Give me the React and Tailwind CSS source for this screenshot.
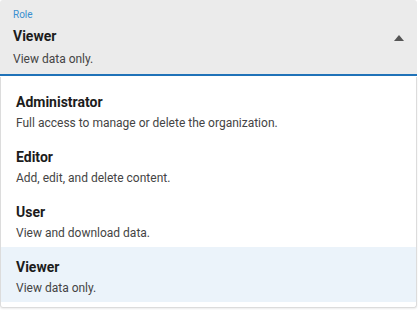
import React, { useState } from "react";

const roles = [
  { name: "Administrator", desc: "Full access to manage or delete the organization." },
  { name: "Editor", desc: "Add, edit, and delete content." },
  { name: "User", desc: "View and download data." },
  { name: "Viewer", desc: "View data only." },
];

function App() {
  const [selected, setSelected] = useState("Viewer");
  const current = roles.find((r) => r.name === selected);

  return (
    <div className="w-[418px] h-[310px] bg-white font-['Roboto','Liberation_Sans',sans-serif]">
      <div className="w-[417px]">
        {/* select field */}
        <div className="bg-[#ebebeb] rounded-t-[3px] border-b-2 border-[#1f72b8] pl-[13px] pr-[13px] pt-[8px] h-[76px] flex items-start">
          <div className="flex-1">
            <div className="text-[10px] leading-[14px] text-[#3a8fd0]">Role</div>
            <div className="mt-[4px] text-[14px] leading-[20px] font-bold text-[#1c1c1c]">{current.name}</div>
            <div className="mt-[5px] text-[12px] leading-[16px] text-[#444]">{current.desc}</div>
          </div>
          <svg className="mt-[27px]" width="10" height="6" viewBox="0 0 10 6">
            <path d="M0 6 L5 0 L10 6 Z" fill="#555" />
          </svg>
        </div>

        {/* menu */}
        <div className="mt-px border border-t-0 border-[#dcdcdc] rounded-b-[3px] pt-[5px] pb-[5px] shadow-[0_1px_2px_rgba(0,0,0,0.08)]">
          {roles.map((r) => (
            <div
              key={r.name}
              onClick={() => setSelected(r.name)}
              className={
                "px-[15px] pt-[10px] pb-[6px] h-[55px] cursor-pointer " +
                (r.name === selected ? "bg-[#ebf3fa]" : "bg-white")
              }
            >
              <div className="text-[14px] leading-[20px] font-bold text-[#1c1c1c]">{r.name}</div>
              <div className="mt-[3px] text-[12px] leading-[16px] text-[#444]">{r.desc}</div>
            </div>
          ))}
        </div>
      </div>
    </div>
  );
}

export default App;
